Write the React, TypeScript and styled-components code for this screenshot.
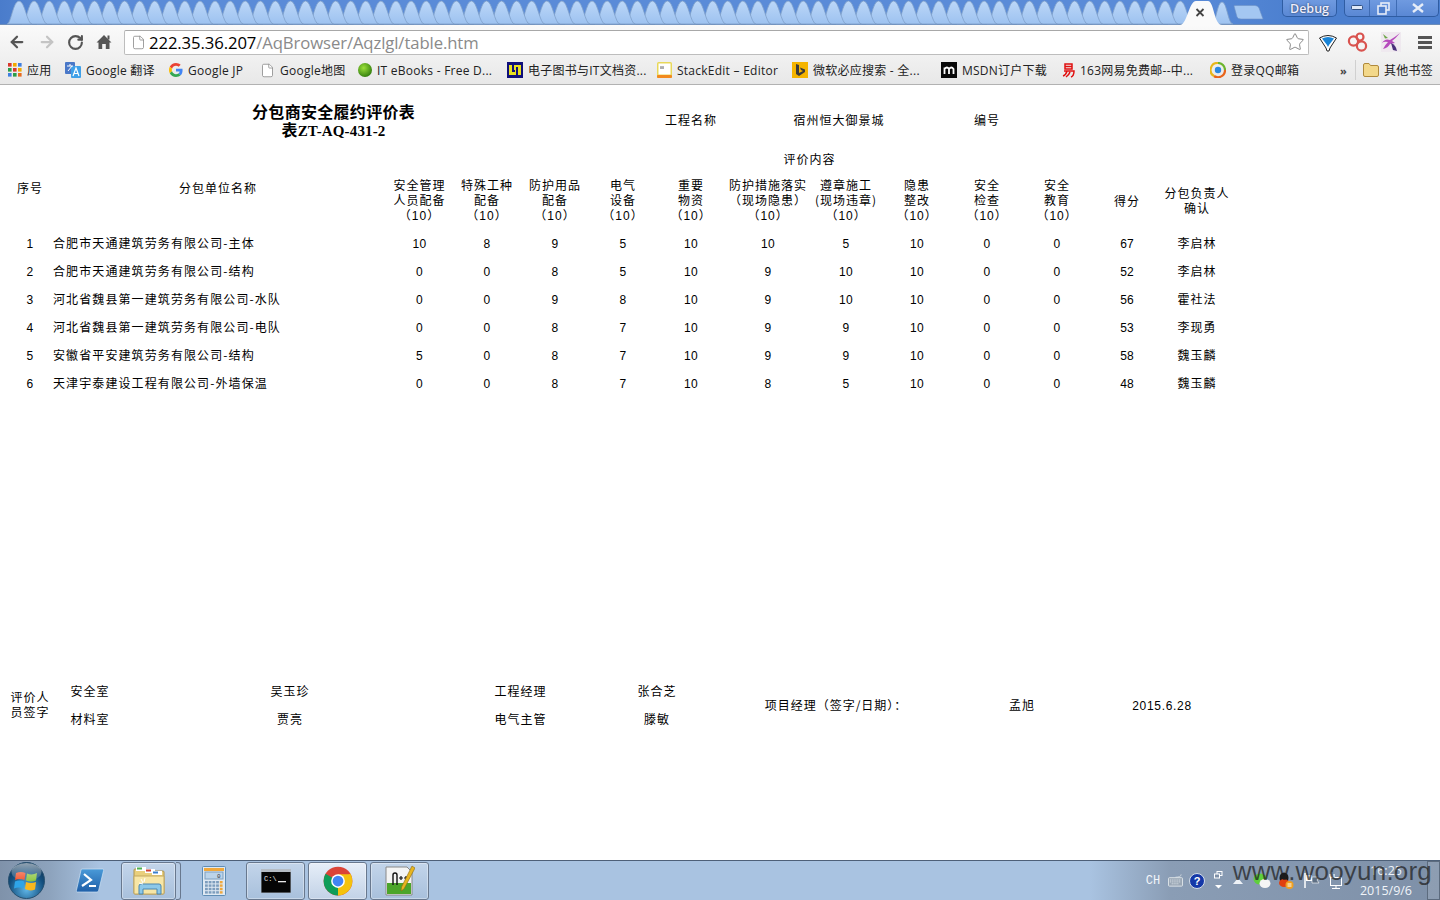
import React from "react";
import styled, { createGlobalStyle } from "styled-components";
import { ArrowLeft, ArrowRight, RotateCw, Star, File } from "lucide-react";

const CJK = `"Noto Sans CJK SC", sans-serif`;
const UI = `"Open Sans", "Noto Sans CJK SC", sans-serif`;

const Global = createGlobalStyle`
  html, body { margin: 0; padding: 0; background: #fff; }
  body { font-family: ${CJK}; overflow: hidden; }
`;

const Screen = styled.div`
  width: 1440px; height: 900px; display: flex; flex-direction: column; position: relative; overflow: hidden;
`;

/* ---------- title bar ---------- */
const TitleBar = styled.div`
  height: 25px; flex: none; display: flex; background: linear-gradient(90deg, #4a7ccb 0, #5a8bd8 60px, #5a8bd8 1180px, #4b7fcf 1300px, #4b7fcf 100%);
  border-bottom: 1px solid #6d8db8; box-sizing: border-box; position: relative;
`;
const TabStrip = styled.svg`
  flex: none; width: 1290px; height: 25px; display: block;
`;
const WindowControls = styled.div`
  flex: none; display: flex; align-items: flex-start; margin-left: -8px;
`;
const DebugPill = styled.div`
  width: 55px; height: 17px; box-sizing: border-box; border: 1px solid #2f5da3; border-top: 0; border-radius: 0 0 5px 5px;
  background: linear-gradient(#6f9ae0, #5a88d4);
  font: 600 12.5px "Open Sans", sans-serif; color: #eef; text-align: center; line-height: 18px;
  text-shadow: 0 0 2px #234; margin-right: 7px;
`;
const WinGroup = styled.div`
  display: flex; height: 17px; box-sizing: border-box; border: 1px solid #2f5da3; border-top: 0; border-radius: 0 0 5px 5px;
  background: linear-gradient(#6f9ae0, #5a88d4);
`;
const WinButton = styled.div<{ $w: number }>`
  width: ${p => p.$w}px; display: flex; align-items: center; justify-content: center;
  & + & { border-left: 1px solid #3f6cb4; }
`;

/* ---------- toolbar ---------- */
const Toolbar = styled.div`
  height: 33px; flex: none; display: flex; align-items: center; background: linear-gradient(#fafafa, #f0f0f0); padding: 1px 0 0 8px; box-sizing: border-box;
`;
const NavButton = styled.div<{ $w: number }>`
  width: ${p => p.$w}px; flex: none; display: flex; align-items: center; justify-content: flex-start;
`;
const Omnibox = styled.div`
  width: 1185px; height: 25px; box-sizing: border-box; flex: none; border: 1px solid #bdbdbd; border-top-color: #a8a8a8; border-radius: 2px; background: #fff;
  display: flex; align-items: center; padding: 0 3px 0 6px; margin-right: 9px;
`;
const UrlText = styled.div`
  flex: 1; margin-left: 3px; font: 16.7px "Open Sans", sans-serif; color: #8a8a8a; white-space: nowrap; letter-spacing: -0.1px;
  b { font-weight: 400; color: #000; }
`;
const ExtIcon = styled.div<{ $w: number }>`
  width: ${p => p.$w}px; flex: none; display: flex; align-items: center;
`;

/* ---------- bookmarks ---------- */
const BookmarkBar = styled.div`
  height: 27px; flex: none; box-sizing: border-box; display: flex; align-items: center; padding: 0 0 2px 8px;
  background: linear-gradient(#f0f0f0, #e8e8e8); border-bottom: 1px solid #b2b2b2;
`;
const Bookmark = styled.div<{ $w: number }>`
  width: ${p => p.$w}px; flex: none; display: flex; align-items: center; gap: 5px; white-space: nowrap;
  font: 12px ${UI}; color: #222; letter-spacing: 0.25px;
  svg { flex: none; }
`;
const Chevron = styled.div`
  width: 15px; flex: none; font: 700 11px "Open Sans", sans-serif; color: #444;
`;
const BarDivider = styled.div`
  width: 1px; height: 20px; background: #d0d0d0; margin-right: 7px;
`;

/* ---------- page ---------- */
const Page = styled.main`
  flex: 1; background: #fff; padding: 10px 0 0 10px; box-sizing: border-box; color: #000; min-height: 0;
`;
const ReportTable = styled.table`
  table-layout: fixed; border-collapse: collapse; width: 1223px; font: 12px/15px ${CJK}; letter-spacing: 1px;
  td { padding: 0 0 2px; text-align: center; vertical-align: middle; white-space: nowrap; }
`;
const TitleRow = styled.tr` height: 50px; `;
const ContentRow = styled.tr` height: 28px; `;
const HeadRow = styled.tr` height: 56px; `;
const DataRow = styled.tr` height: 28px; `;
const TitleCell = styled.td`
  && { padding: 1px 0 0; }
  font-weight: 700; font-size: 16px; line-height: 18px; letter-spacing: 0.3px;
`;
const TitleCode = styled.span`
  font-family: "Liberation Serif", serif; font-size: 15px; letter-spacing: 0.15px;
  &::before { content: "表"; font: 700 16px/18px ${CJK}; }
`;
const NameCell = styled.td`
  && { text-align: left; padding-left: 3px; }
  letter-spacing: 1.1px;
`;
const NumCell = styled.td`
  && { padding: 2px 0 0; }
  font-family: "Liberation Sans", sans-serif; letter-spacing: 0.3px;
`;
const HeadCell = styled.td<{ $lift?: number }>`
  && { padding-bottom: ${p => p.$lift ?? 2}px; }
`;
const Paren = styled.span`
  font-family: "Liberation Sans", sans-serif; letter-spacing: 1px;
  &::before, &::after { font: 12px/15px ${CJK}; letter-spacing: 1px; }
  &::before { content: "（"; }
  &::after { content: "）"; }
`;
const SignTable = styled(ReportTable)`
  width: 1219px; margin-top: 280px;
`;
const SignRow = styled.tr` height: 28px; `;
const DateCell = styled.td`
  && { padding: 2px 0 0; }
  font-family: "Liberation Sans", sans-serif; letter-spacing: 0.7px;
`;

/* ---------- taskbar ---------- */
const Taskbar = styled.footer`
  height: 40px; flex: none; box-sizing: border-box; display: flex; align-items: stretch; border-top: 1px solid #4e6078;
  background: linear-gradient(90deg, #7f92aa 0, #8da3bd 50px, #a9c3e1 100px, #a9c3e1 1090px, #8a9db5 1170px, #7e90a8 1440px);
  position: relative;
`;
const Orb = styled.div`
  width: 72px; flex: none; padding-left: 8px; display: flex; align-items: center; box-sizing: border-box;
`;
const PinnedIcon = styled.div<{ $w: number }>`
  width: ${p => p.$w}px; flex: none; display: flex; align-items: center; justify-content: center;
`;
const TaskButton = styled.div<{ $w: number; $active?: boolean; $stack?: boolean }>`
  width: ${p => p.$w}px; flex: none; margin: 1px 0 0; box-sizing: border-box; height: 38px; display: flex; align-items: center; justify-content: center;
  border: 1px solid #68788e; border-radius: 3px;
  background: ${p => p.$active ? "linear-gradient(#e6eef8, #c2d2e6)" : "linear-gradient(#c3d5ea, #a8c0dc)"};
  box-shadow: inset 0 0 0 1px rgba(255,255,255,.35);
  margin-right: ${p => p.$stack ? 4 : 3}px;
`;
const StackEdge = styled.div`
  width: 5px; height: 38px; margin: 1px 0 0 -4px; flex: none; box-sizing: border-box; border: 1px solid #68788e; border-left: 0; border-radius: 0 3px 3px 0; background: #b4c9e2;
`;
const Tray = styled.div`
  margin-left: auto; display: flex; align-items: center; position: relative; width: 302px; flex: none; height: 100%;
`;
const Lang = styled.div`
  width: 30px; flex: none; font: 12px "Liberation Mono", monospace; color: #f2f5fa; text-align: center;
`;
const TrayIcon = styled.div<{ $w: number }>`
  width: ${p => p.$w}px; flex: none; display: flex; align-items: center; justify-content: center;
`;
const Clock = styled.div`
  width: 82px; flex: none; text-align: center; font: 12.5px/20px "Open Sans", sans-serif; color: #f0f4f9;
`;
const ShowDesktop = styled.div`
  flex: 1; align-self: stretch; border: 1px solid #5c6b7e; background: rgba(255,255,255,.12); box-sizing: border-box;
`;
const Watermark = styled.div`
  position: absolute; right: 8px; top: 856px; font: 26px "Liberation Sans", sans-serif; color: rgba(30,30,30,.72); letter-spacing: 0.2px; white-space: nowrap;
`;

/* ---------- icons ---------- */
const tabPath = (x: number) =>
  `M${x} 24 C${x + 4} 24 ${x + 6} 1 ${x + 12} 1 C${x + 18} 1 ${x + 20} 24 ${x + 25} 24 Z`;

const tabXs: number[] = [];
for (let i = 0; i < 78; i++) tabXs.push(7 + i * 15.08);

const TabsArt = () => (
  <TabStrip viewBox="0 0 1290 25">
    <defs>
      <linearGradient id="tb" x1="0" y1="0" x2="0" y2="1">
        <stop offset="0" stopColor="#bcd7f8" />
        <stop offset="1" stopColor="#9dc2f0" />
      </linearGradient>
    </defs>
    {[...tabXs].reverse().map(x => (
      <path key={x} d={tabPath(x)} fill="url(#tb)" stroke="#7f9fc9" strokeWidth="0.8" />
    ))}
    <path d="M1212 24 C1216 24 1217 2 1222 2 C1227 2 1228 24 1233 24 Z" fill="url(#tb)" stroke="#7f9fc9" strokeWidth="0.8" />
    <path d="M1180 25 C1187 25 1189 1 1196 1 L1208 1 C1214 1 1214 25 1222 25 Z" fill="#fafafa" />
    <path d="M1196.5 9 L1203.5 16 M1203.5 9 L1196.5 16" stroke="#444" strokeWidth="1.8" />
    <path d="M1234 6 Q1233 5.5 1236 5.5 L1255 5.5 Q1258 5.5 1259 8 L1263 19 L1241 19 Q1238 19 1237 17 Z" fill="#a4c7f2" stroke="#6f92c6" strokeWidth=".6" />
  </TabStrip>
);

const HomeIcon = () => (
  <svg width="16" height="16" viewBox="0 0 16 16">
    <path d="M8 1 L15.5 8.5 L13.5 8.5 L13.5 15 L9.8 15 L9.8 10 L6.2 10 L6.2 15 L2.5 15 L2.5 8.5 L.5 8.5 Z" fill="#555" />
    <rect x="11.5" y="1.5" width="2" height="4" fill="#555" />
  </svg>
);

const FunnelIcon = () => (
  <svg width="20" height="20" viewBox="0 0 20 20">
    <path d="M1.5 6 Q10 1 18.5 6 L12 16 L11 19 L9 19 L8 16 Z" fill="#fff" stroke="#222" strokeWidth="1" />
    <path d="M4 6.5 Q10 3.5 16 6.5 L11 13 L10 15 L9 13 Z" fill="#1a84d6" />
  </svg>
);
const RingsIcon = () => (
  <svg width="22" height="20" viewBox="0 0 22 20" fill="none" stroke="#d9534f" strokeWidth="2.2">
    <circle cx="6.5" cy="9" r="4.6" /><circle cx="13" cy="5" r="3.5" /><circle cx="14.5" cy="14" r="4.6" />
  </svg>
);
const OrchidIcon = () => (
  <svg width="20" height="20" viewBox="0 0 20 20">
    <rect width="20" height="20" fill="#efe9ef" />
    <path d="M19 1 Q15 6 11 9 L14 11 L9 12 Q7 16 2 17 Q4 13 7 10 Q3 9 1 11 Q4 6 9 8 Q14 5 19 1 Z" fill="#b64bbd" />
    <path d="M10 11 Q15 13 16 19 L12 18 Z" fill="#4a2f7a" />
    <path d="M2 2 L7 6 L4 6.5 Z" fill="#6fa64a" />
  </svg>
);
const MenuIcon = () => (
  <svg width="14" height="13" viewBox="0 0 14 13" fill="#555">
    <rect y="0" width="14" height="3" /><rect y="5" width="14" height="3" /><rect y="10" width="14" height="3" />
  </svg>
);
const AppsIcon = () => {
  const c = ["#d9372c", "#f2a900", "#3e7fe0", "#2a9d48", "#d9372c", "#f2a900", "#3e7fe0", "#2a9d48", "#e86b1f"];
  return (
    <svg width="14" height="14" viewBox="0 0 14 14">
      {c.map((f, i) => <rect key={i} x={(i % 3) * 5} y={Math.floor(i / 3) * 5} width="3.6" height="3.6" fill={f} />)}
    </svg>
  );
};
const TranslateIcon = () => (
  <svg width="16" height="16" viewBox="0 0 16 16">
    <rect x="0" y="0" width="10" height="12" rx="1" fill="#4a78c8" />
    <rect x="6" y="4" width="10" height="12" rx="1" fill="#3fa0e8" />
    <path d="M8 14 L11 6 L14 14 M9.2 11.5 H12.8" stroke="#fff" strokeWidth="1.2" fill="none" />
    <path d="M2 4 H8 M5 2 V4 M3 9 L7 4" stroke="#fff" strokeWidth="1" fill="none" />
  </svg>
);
const GoogleG = () => (
  <svg width="14" height="14" viewBox="0 0 48 48">
    <path fill="#EA4335" d="M24 9.5c3.5 0 6.7 1.3 9.1 3.5l6.8-6.8C35.8 2.4 30.2 0 24 0 14.6 0 6.5 5.4 2.6 13.2l7.9 6.2C12.4 13.6 17.7 9.5 24 9.5z" />
    <path fill="#4285F4" d="M46.5 24.5c0-1.6-.1-3.1-.4-4.5H24v9h12.7c-.6 3-2.2 5.5-4.7 7.2l7.7 6c4.5-4.2 6.8-10.3 6.8-17.7z" />
    <path fill="#FBBC05" d="M10.5 28.6c-.5-1.5-.8-3-.8-4.6s.3-3.2.8-4.6l-7.9-6.2C.9 16.5 0 20.1 0 24s.9 7.5 2.6 10.8l7.9-6.2z" />
    <path fill="#34A853" d="M24 48c6.5 0 11.9-2.1 15.9-5.8l-7.7-6c-2.1 1.4-4.9 2.3-8.2 2.3-6.3 0-11.6-4.2-13.5-9.9l-7.9 6.2C6.5 42.6 14.6 48 24 48z" />
  </svg>
);
const PageIcon = () => <File size={15} color="#8a8a8a" fill="#fff" strokeWidth={1.3} />;
const GreenBall = () => (
  <svg width="14" height="14" viewBox="0 0 14 14">
    <defs><radialGradient id="gb" cx=".4" cy=".35" r=".7"><stop offset="0" stopColor="#9be03a" /><stop offset="1" stopColor="#2e7a0c" /></radialGradient></defs>
    <circle cx="7" cy="7" r="7" fill="url(#gb)" />
  </svg>
);
const EbookIcon = () => (
  <svg width="16" height="16" viewBox="0 0 16 16">
    <rect width="16" height="16" fill="#10107a" />
    <rect x="2" y="3" width="12" height="10" fill="#e8e020" />
    <path d="M6 3 V9 H8 M10 5 V13" stroke="#10107a" strokeWidth="2" fill="none" />
  </svg>
);
const StackIcon = () => (
  <svg width="15" height="16" viewBox="0 0 15 16">
    <rect width="15" height="16" rx="1.5" fill="#e8d85a" />
    <rect x="1.5" y="1.5" width="12" height="11" fill="#fff" />
    <rect y="13" width="15" height="3" rx="1" fill="#f28a1e" />
    <path d="M4 4 V7 M6 4 V7 M3 5 H7 M3 6.2 H7" stroke="#777" strokeWidth=".6" />
  </svg>
);
const BingIcon = () => (
  <svg width="16" height="16" viewBox="0 0 16 16">
    <rect width="16" height="16" fill="#f5b400" />
    <path d="M4 2 L7 3 V11 L11 9 L9 8 L8 5.5 L13 7.5 V10 L7 14 L4 12 Z" fill="#3a3a3a" />
  </svg>
);
const MsdnIcon = () => (
  <svg width="16" height="16" viewBox="0 0 16 16">
    <rect width="16" height="16" fill="#0a0a0a" />
    <path d="M3.5 12 V5.5 M3.5 7 Q6 4 8 7 V12 M8 7 Q10.5 4 12.5 7 V12" stroke="#fff" strokeWidth="1.8" fill="none" />
  </svg>
);
const WangyiIcon = () => (
  <svg width="13" height="15" viewBox="0 0 13 15" fill="none" stroke="#e01010" strokeWidth="1.5">
    <rect x="3" y="1" width="7" height="5" /><path d="M3 3.5 H10" /><path d="M2 8 H12 Q12 13 9 14 M5 8 Q4 12 1 13 M8 9 Q7 12 4 14" />
  </svg>
);
const QQMailIcon = () => (
  <svg width="16" height="16" viewBox="0 0 16 16" fill="none">
    <path d="M8 1 A7 7 0 0 1 15 8" stroke="#6cb52d" strokeWidth="2.2" />
    <path d="M15 8 A7 7 0 0 1 4 14" stroke="#e8641b" strokeWidth="2.2" />
    <path d="M4 14 A7 7 0 0 1 8 1" stroke="#e8b71b" strokeWidth="2.2" />
    <circle cx="8" cy="8" r="3.2" fill="#2a88e0" />
  </svg>
);
const FolderIcon = () => (
  <svg width="16" height="14" viewBox="0 0 16 14">
    <path d="M.5 2 Q.5 .5 2 .5 H6 L7.5 2.5 H14 Q15.5 2.5 15.5 4 V12 Q15.5 13.5 14 13.5 H2 Q.5 13.5 .5 12 Z" fill="#f3d88a" stroke="#b08a3c" />
  </svg>
);
const WinOrb = () => (
  <svg width="37" height="37" viewBox="0 0 37 37">
    <defs>
      <radialGradient id="orb" cx=".5" cy=".75" r=".8"><stop offset="0" stopColor="#5fb6e8" /><stop offset=".6" stopColor="#14507f" /><stop offset="1" stopColor="#0b2a48" /></radialGradient>
      <linearGradient id="gloss" x1="0" y1="0" x2="0" y2="1"><stop offset="0" stopColor="#fff" stopOpacity=".55" /><stop offset="1" stopColor="#fff" stopOpacity=".05" /></linearGradient>
    </defs>
    <circle cx="18.5" cy="18.5" r="18" fill="url(#orb)" stroke="#27506f" />
    <path d="M8 11 Q13 9 17.5 11 L16.5 18 Q12 16 7 18 Z" fill="#f0512a" />
    <path d="M19 11.5 Q24 13.5 29 11 L28 18.5 Q23 20.5 18 18.5 Z" fill="#8cc63f" />
    <path d="M7 19.5 Q12 17.5 16.3 19.5 L15.3 26.5 Q11 24.5 6 26.5 Z" fill="#2ea4e8" />
    <path d="M18 20 Q23 22 28 20 L27 27.5 Q22 29.5 17 27 Z" fill="#f9b81e" />
    <ellipse cx="18.5" cy="10" rx="15" ry="9" fill="url(#gloss)" />
  </svg>
);
const PowerShellIcon = () => (
  <svg width="28" height="25" viewBox="0 0 28 25">
    <defs><linearGradient id="ps" x1="0" y1="0" x2="0" y2="1"><stop offset="0" stopColor="#4a9ad8" /><stop offset="1" stopColor="#1f5fa8" /></linearGradient></defs>
    <path d="M6 1 H27 Q28 1 27.6 2.5 L22.5 23 Q22 24 21 24 H1 Q0 24 .4 22.5 L5 2 Q5.2 1 6 1 Z" fill="url(#ps)" stroke="#cfe2f4" strokeWidth=".7" />
    <path d="M8 6 L15 12 L6 18 M13 18 H20" stroke="#fff" strokeWidth="2.2" fill="none" />
  </svg>
);
const ExplorerIcon = () => (
  <svg width="32" height="30" viewBox="0 0 32 30">
    <path d="M1 4 Q1 3 2 3 H12 L14 5 H30 Q31 5 31 6 V27 Q31 28 30 28 H2 Q1 28 1 27 Z" fill="#e9cf7c" stroke="#ad9450" />
    <rect x="3" y="1" width="10" height="4" fill="#fff" /><rect x="4" y="1.5" width="5" height="2" fill="#4cb050" />
    <rect x="12" y="3" width="10" height="4" fill="#fff" /><rect x="13" y="3.5" width="5" height="2" fill="#d04030" />
    <rect x="19" y="5" width="10" height="4" fill="#fff" /><rect x="20" y="5.5" width="5" height="2" fill="#3a80d0" />
    <path d="M1 10 H31 V27 Q31 28 30 28 H2 Q1 28 1 27 Z" fill="#f7e6a6" stroke="#c3a860" />
    <path d="M6 28 V20 Q6 18 8 18 H26 Q28 18 28 20 V28 H24 V23 H10 V28 Z" fill="#8cc8e8" stroke="#4a86b0" />
    <path d="M8 13 L10 17 M12 12 L11 16 M6 17 L10 18" stroke="#fff" strokeWidth="1" />
  </svg>
);
const CalcIcon = () => (
  <svg width="24" height="30" viewBox="0 0 24 30">
    <rect x=".5" y=".5" width="23" height="29" rx="1" fill="#dfe9f3" stroke="#5f8db5" />
    <rect x="2" y="2" width="20" height="3" fill="#f0a83c" />
    <rect x="3" y="6" width="18" height="7" fill="#bcd4ea" stroke="#7ea0c0" />
    <text x="15" y="12" fontSize="6" fontFamily="Liberation Mono" fill="#333">0</text>
    {[0, 1, 2, 3].map(r => [0, 1, 2, 3, 4].map(c => (
      <rect key={`${r}-${c}`} x={3 + c * 3.7} y={15 + r * 3.4} width="2.8" height="2.4" fill={c === 4 ? "#f0a83c" : "#7d9dbd"} />
    )))}
  </svg>
);
const CmdIcon = () => (
  <svg width="30" height="24" viewBox="0 0 30 24">
    <rect width="30" height="24" fill="#050505" stroke="#9aa5b0" />
    <rect x="0" y="0" width="30" height="3" fill="#b5bcc4" />
    <text x="3" y="12" fontSize="7" fontFamily="Liberation Mono" fill="#e8e8e8">C:\</text>
    <rect x="17" y="12" width="8" height="1.3" fill="#e8e8e8" />
  </svg>
);
const ChromeIcon = () => (
  <svg width="30" height="30" viewBox="0 0 48 48">
    <circle cx="24" cy="24" r="23" fill="#db4437" />
    <path d="M24 24 L43.9 12.5 A23 23 0 0 1 24 47 Z" fill="#f4c20d" />
    <path d="M24 24 L24 47 A23 23 0 0 1 4.1 12.5 Z" fill="#0f9d58" />
    <path d="M24 13 H43.9 L38 24 H24 Z" fill="#f4c20d" />
    <circle cx="24" cy="24" r="11" fill="#fff" />
    <circle cx="24" cy="24" r="8.6" fill="#4285f4" />
  </svg>
);
const NotepadIcon = () => (
  <svg width="30" height="32" viewBox="0 0 30 32">
    <path d="M1 2 H22 L27 7 V30 H1 Z" fill="#f4f4f4" stroke="#888" />
    <path d="M2 18 H26 V29 H2 Z" fill="#4ca52a" />
    <path d="M8 20 V10 Q8 8 10 8 Q12 8 12 10 V20" fill="none" stroke="#111" strokeWidth="1.4" />
    <path d="M14 13 H18 M16 11 V15 M19 13 H23 M21 11 V15" stroke="#111" strokeWidth="1.2" />
    <path d="M27 1 L30 3 L19 24 L16 26 L16.5 22 Z" fill="#e8b520" stroke="#8a6a10" strokeWidth=".6" />
  </svg>
);
const KeyboardIcon = () => (
  <svg width="15" height="13" viewBox="0 0 16 13">
    <path d="M14 0 Q14 3 8 3" fill="none" stroke="#cfd6de" />
    <rect x=".5" y="3.5" width="15" height="9" rx="1" fill="#9aa7b5" stroke="#dfe5ea" />
    <path d="M2 6 H14 M2 8 H14 M4 10 H12" stroke="#e8edf2" strokeDasharray="1 1" />
  </svg>
);
const HelpIcon = () => (
  <svg width="16" height="16" viewBox="0 0 16 16">
    <circle cx="8" cy="8" r="7.5" fill="#1438a8" stroke="#d5dee8" />
    <text x="8" y="12" fontSize="11" fontWeight="700" textAnchor="middle" fontFamily="Liberation Sans" fill="#fff">?</text>
  </svg>
);
const WindowsFlipIcon = () => (
  <svg width="9" height="20" viewBox="0 0 9 20" fill="none" stroke="#fff">
    <rect x="3" y=".5" width="5" height="4" /><rect x=".5" y="3" width="5" height="4" fill="#7e90a8" />
    <path d="M1 14 H8 L4.5 17.5 Z" fill="#fff" stroke="none" />
  </svg>
);
const TriangleIcon = () => (
  <svg width="10" height="6" viewBox="0 0 10 6"><path d="M5 0 L10 6 H0 Z" fill="#eef2f7" /></svg>
);
const WechatIcon = () => (
  <svg width="18" height="16" viewBox="0 0 18 16">
    <ellipse cx="7" cy="6" rx="6.5" ry="5.5" fill="#5fcf3c" />
    <ellipse cx="12" cy="10.5" rx="5.5" ry="4.5" fill="#f5f5f5" />
  </svg>
);
const QQIcon = () => (
  <svg width="16" height="18" viewBox="0 0 16 18">
    <ellipse cx="6" cy="6" rx="4.5" ry="5.5" fill="#1a1a1a" />
    <ellipse cx="6" cy="11" rx="5" ry="4" fill="#e04010" />
    <circle cx="11.5" cy="13" r="4" fill="#f0a020" />
    <path d="M9.5 12 H13.5 M9.5 14 H13.5" stroke="#fff" />
  </svg>
);
const FlagIcon = () => (
  <svg width="16" height="17" viewBox="0 0 16 17">
    <path d="M1 1 V16" stroke="#fff" strokeWidth="1.5" />
    <path d="M2 3 H8 V9 H2 Z" fill="#fff" />
    <path d="M8 5 H15 L13 8 L15 11 H8 Z" fill="#5e6f84" stroke="#fff" strokeWidth=".6" />
  </svg>
);
const NetworkIcon = () => (
  <svg width="14" height="18" viewBox="0 0 14 18" fill="none" stroke="#fff">
    <rect x="2.5" y="5.5" width="11" height="8" /><path d="M8 14 V16 M4 16.5 H12" />
    <path d="M4 0 V5 M2 2 V5 H6 V2" strokeWidth="1.2" />
  </svg>
);

const columns = [40, 336, 67, 68, 68, 68, 68, 86, 70, 72, 68, 72, 68, 72];

const heads: string[][] = [
  ["安全管理", "人员配备"], ["特殊工种", "配备"], ["防护用品", "配备"], ["电气", "设备"], ["重要", "物资"],
  ["防护措施落实", "（现场隐患）"], ["遵章施工", "(现场违章)"], ["隐患", "整改"], ["安全", "检查"], ["安全", "教育"],
];

const rows = [
  { no: 1, name: "合肥市天通建筑劳务有限公司-主体", v: [10, 8, 9, 5, 10, 10, 5, 10, 0, 0, 67], who: "李启林" },
  { no: 2, name: "合肥市天通建筑劳务有限公司-结构", v: [0, 0, 8, 5, 10, 9, 10, 10, 0, 0, 52], who: "李启林" },
  { no: 3, name: "河北省魏县第一建筑劳务有限公司-水队", v: [0, 0, 9, 8, 10, 9, 10, 10, 0, 0, 56], who: "霍社法" },
  { no: 4, name: "河北省魏县第一建筑劳务有限公司-电队", v: [0, 0, 8, 7, 10, 9, 9, 10, 0, 0, 53], who: "李现勇" },
  { no: 5, name: "安徽省平安建筑劳务有限公司-结构", v: [5, 0, 8, 7, 10, 9, 9, 10, 0, 0, 58], who: "魏玉麟" },
  { no: 6, name: "天津宇泰建设工程有限公司-外墙保温", v: [0, 0, 8, 7, 10, 8, 5, 10, 0, 0, 48], who: "魏玉麟" },
];

const bookmarks: { w: number; icon: React.ReactNode; label: string }[] = [
  { w: 57, icon: <AppsIcon />, label: "应用" },
  { w: 104, icon: <TranslateIcon />, label: "Google 翻译" },
  { w: 91, icon: <GoogleG />, label: "Google JP" },
  { w: 98, icon: <PageIcon />, label: "Google地图" },
  { w: 149, icon: <GreenBall />, label: "IT eBooks - Free D..." },
  { w: 150, icon: <EbookIcon />, label: "电子图书与IT文档资..." },
  { w: 135, icon: <StackIcon />, label: "StackEdit – Editor" },
  { w: 149, icon: <BingIcon />, label: "微软必应搜索 - 全..." },
  { w: 121, icon: <MsdnIcon />, label: "MSDN订户下载" },
  { w: 148, icon: <WangyiIcon />, label: "163网易免费邮--中..." },
  { w: 130, icon: <QQMailIcon />, label: "登录QQ邮箱" },
];

export default function App() {
  return (
    <Screen>
      <Global />
      <TitleBar>
        <TabsArt />
        <WindowControls>
          <DebugPill>Debug</DebugPill>
          <WinGroup>
            <WinButton $w={24}>
              <svg width="12" height="6" viewBox="0 0 12 6"><rect x=".5" y=".5" width="11" height="4" rx="1" fill="#dfe8f6" stroke="#2f4f80" /></svg>
            </WinButton>
            <WinButton $w={26}>
              <svg width="13" height="13" viewBox="0 0 13 13" fill="none" stroke="#e6edf8" strokeWidth="1.6"><rect x="4" y="1" width="8" height="7" /><rect x="1" y="4" width="8" height="8" fill="#4f7fcc" /></svg>
            </WinButton>
            <WinButton $w={41}>
              <svg width="12" height="10" viewBox="0 0 12 10" stroke="#e6edf8" strokeWidth="2.4"><path d="M1 1 L11 9 M11 1 L1 9" /></svg>
            </WinButton>
          </WinGroup>
        </WindowControls>
      </TitleBar>

      <Toolbar>
        <NavButton $w={30}><ArrowLeft size={18} color="#555" strokeWidth={3} /></NavButton>
        <NavButton $w={29}><ArrowRight size={18} color="#c4c4c4" strokeWidth={3} /></NavButton>
        <NavButton $w={29}><RotateCw size={17} color="#555" strokeWidth={3} /></NavButton>
        <NavButton $w={28}><HomeIcon /></NavButton>
        <Omnibox>
          <File size={15} color="#8a8a8a" strokeWidth={1.3} />
          <UrlText><b>222.35.36.207</b>/AqBrowser/Aqzlgl/table.htm</UrlText>
          <Star size={20} color="#8a8a8a" strokeWidth={1.2} />
        </Omnibox>
        <ExtIcon $w={29}><FunnelIcon /></ExtIcon>
        <ExtIcon $w={34}><RingsIcon /></ExtIcon>
        <ExtIcon $w={37}><OrchidIcon /></ExtIcon>
        <ExtIcon $w={16}><MenuIcon /></ExtIcon>
      </Toolbar>

      <BookmarkBar>
        {bookmarks.map(b => (
          <Bookmark key={b.label} $w={b.w}>{b.icon}<span>{b.label}</span></Bookmark>
        ))}
        <Chevron>»</Chevron>
        <BarDivider />
        <Bookmark $w={70}><FolderIcon /><span>其他书签</span></Bookmark>
      </BookmarkBar>

      <Page>
        <ReportTable>
          <colgroup>{columns.map((w, i) => <col key={i} style={{ width: w }} />)}</colgroup>
          <tbody>
            <TitleRow>
              <TitleCell colSpan={6}>分包商安全履约评价表<br /><TitleCode>ZT-AQ-431-2</TitleCode></TitleCell>
              <td>工程名称</td>
              <td colSpan={3}>宿州恒大御景城</td>
              <td>编号</td>
              <td colSpan={3} />
            </TitleRow>
            <ContentRow>
              <td colSpan={2} />
              <td colSpan={12}>评价内容</td>
            </ContentRow>
            <HeadRow>
              <HeadCell $lift={28}>序号</HeadCell>
              <HeadCell $lift={28}>分包单位名称</HeadCell>
              {heads.map((lines, i) => (
                <td key={i}>{lines[0]}<br />{lines[1]}<br /><Paren>10</Paren></td>
              ))}
              <td>得分</td>
              <HeadCell>分包负责人<br />确认</HeadCell>
            </HeadRow>
            {rows.map(r => (
              <DataRow key={r.no}>
                <NumCell>{r.no}</NumCell>
                <NameCell>{r.name}</NameCell>
                {r.v.map((n, i) => <NumCell key={i}>{n}</NumCell>)}
                <td>{r.who}</td>
              </DataRow>
            ))}
          </tbody>
        </ReportTable>

        <SignTable>
          <colgroup>
            {[40, 80, 320, 141, 132, 226, 146, 134].map((w, i) => <col key={i} style={{ width: w }} />)}
          </colgroup>
          <tbody>
            <SignRow>
              <td rowSpan={2}>评价人<br />员签字</td>
              <td>安全室</td>
              <td>吴玉珍</td>
              <td>工程经理</td>
              <td>张合芝</td>
              <td rowSpan={2}>项目经理（签字/日期）：</td>
              <td rowSpan={2}>孟旭</td>
              <DateCell rowSpan={2}>2015.6.28</DateCell>
            </SignRow>
            <SignRow>
              <td>材料室</td>
              <td>贾亮</td>
              <td>电气主管</td>
              <td>滕敏</td>
            </SignRow>
          </tbody>
        </SignTable>
      </Page>

      <Taskbar>
        <Orb><WinOrb /></Orb>
        <PinnedIcon $w={35}><PowerShellIcon /></PinnedIcon>
        <PinnedIcon $w={14} />
        <TaskButton $w={55} $stack><ExplorerIcon /></TaskButton>
        <StackEdge />
        <PinnedIcon $w={65}><CalcIcon /></PinnedIcon>
        <TaskButton $w={59}><CmdIcon /></TaskButton>
        <TaskButton $w={59} $active><ChromeIcon /></TaskButton>
        <TaskButton $w={59}><NotepadIcon /></TaskButton>
        <Tray>
          <Lang>CH</Lang>
          <TrayIcon $w={15}><KeyboardIcon /></TrayIcon>
          <TrayIcon $w={28}><HelpIcon /></TrayIcon>
          <TrayIcon $w={14}><WindowsFlipIcon /></TrayIcon>
          <TrayIcon $w={26}><TriangleIcon /></TrayIcon>
          <TrayIcon $w={22}><WechatIcon /></TrayIcon>
          <TrayIcon $w={26}><QQIcon /></TrayIcon>
          <TrayIcon $w={26}><FlagIcon /></TrayIcon>
          <TrayIcon $w={20}><NetworkIcon /></TrayIcon>
          <Clock>16:25<br />2015/9/6</Clock>
          <ShowDesktop />
        </Tray>
      </Taskbar>
      <Watermark>www.wooyun.org</Watermark>
    </Screen>
  );
}
